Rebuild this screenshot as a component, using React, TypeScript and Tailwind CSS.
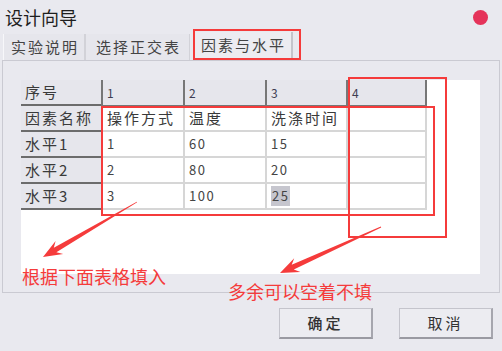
import React from 'react';

const cjk = '"Noto Sans CJK SC", "Noto Sans", sans-serif';

// table rows: label + 4 cells
const rows = [
  { label: '因素名称', cells: ['操作方式', '温度', '洗涤时间', ''] },
  { label: '水平1', cells: ['1', '60', '15', ''] },
  { label: '水平2', cells: ['2', '80', '20', ''] },
  { label: '水平3', cells: ['3', '100', '25', ''] },
];

const colW = ['w-[82px]', 'w-[82px]', 'w-[81px]', 'w-[81px]'];

// tapered arrow polygon from start (thin) to tip
function arrowPoints(sx: number, sy: number, tx: number, ty: number) {
  const dx = tx - sx;
  const dy = ty - sy;
  const len = Math.hypot(dx, dy);
  const ux = dx / len;
  const uy = dy / len;
  const nx = -uy;
  const ny = ux;
  const p = (along: number, side: number) =>
    `${(tx - ux * along + nx * side).toFixed(1)},${(ty - uy * along + ny * side).toFixed(1)}`;
  const s = (side: number) => `${(sx + nx * side).toFixed(1)},${(sy + ny * side).toFixed(1)}`;
  return [s(0.4), p(14, 2.6), p(19, 7.5), p(0, 0), p(19, -7.5), p(14, -2.6), s(-0.4)].join(' ');
}

export default function App() {
  return (
    <div
      className="relative w-[502px] h-[351px] overflow-hidden bg-[#e9e9ef] text-[#3a3a3a]"
      style={{ fontFamily: cjk }}
    >
      {/* Title bar */}
      <div className="flex h-[30px] items-center justify-between pl-[5px] pr-[14px] pt-[4px]">
        <span className="text-[18px] leading-none text-[#1e1e1e]">设计向导</span>
        <span className="block h-[15px] w-[15px] rounded-full bg-[#e5335a]" />
      </div>

      {/* Tabs */}
      <div className="flex h-[30px] items-end pl-[3px] text-[15px] tracking-[2px] text-[#444]">
        <div className="flex h-[26px] w-[83px] items-center justify-center border-l border-[#f7f7fa] border-r-2 border-r-[#d2d2d8] bg-[#e6e6ec] pl-[2px]">
          实验说明
        </div>
        <div className="flex h-[26px] w-[104px] items-center justify-center border-r border-[#d2d2d8] bg-[#e6e6ec] pl-[2px]">
          选择正交表
        </div>
        <div className="ml-[3px] flex h-[28px] w-[100px] items-center justify-center border-l border-[#f7f7fa] border-r-2 border-r-[#c4c4cb] bg-[#ececf1] pb-[1px] pl-[2px]">
          因素与水平
        </div>
      </div>

      {/* Panel */}
      <div className="mx-[2px] h-[233px] border border-[#cacad2] pl-[18px] pt-[19px]">
        <div className="h-[194px] w-[459px] bg-white">
          <div className="flex">
            <div className="flex h-[26px] w-[80px] items-center border-b-2 border-[#6c6c6c] bg-[#e6e6ec] pl-[4px] text-[15px] tracking-[2px]">
              序号
            </div>
            {['1', '2', '3', '4'].map((n, i) => (
              <div
                key={n}
                className={`flex h-[26px] ${colW[i]} items-center border-b border-l-2 border-[#777] bg-[#e6e6ec] pl-[4px] text-[12px] text-[#3d3d52] ${i === 3 ? 'border-r-2' : ''}`}
              >
                {n}
              </div>
            ))}
          </div>
          {rows.map((r) => (
            <div key={r.label} className="flex">
              <div className="flex h-[26px] w-[80px] items-center border-b-2 border-[#6c6c6c] bg-[#e6e6ec] pl-[4px] text-[15px] tracking-[2px]">
                {r.label}
              </div>
              {r.cells.map((c, i) => (
                <div
                  key={i}
                  className={`flex h-[26px] ${colW[i]} items-center border-b-2 border-l-2 border-[#d6d6d6] pl-[4px] ${i === 3 ? 'border-r-2' : ''} ${/^\d+$/.test(c) ? 'text-[13px] tracking-[1.5px] text-[#444]' : 'text-[15px] tracking-[2px]'}`}
                >
                  {c === '25' ? <span className="bg-[#c6c6ce] px-[1px]">{c}</span> : c}
                </div>
              ))}
            </div>
          ))}
        </div>
      </div>

      {/* Buttons */}
      <div className="mt-[15px] flex justify-end gap-[26px] pr-[9px]">
        <button className="h-[31px] w-[94px] border border-[#c4c4cc] border-b-2 border-b-[#9a9aa2] border-r-2 border-r-[#a6a6ae] bg-[#ececf1] text-[15px] font-medium tracking-[3px] text-[#333]">
          确定
        </button>
        <button className="h-[31px] w-[94px] border border-[#c4c4cc] border-b-2 border-b-[#9a9aa2] border-r-2 border-r-[#a6a6ae] bg-[#ececf1] text-[15px] tracking-[3px] text-[#333]">
          取消
        </button>
      </div>

      {/* Annotation boxes */}
      <div className="absolute left-[193px] top-[29px] h-[31px] w-[108px] border-2 border-[#f53b3b]" />
      <div className="absolute left-[101px] top-[106px] h-[110px] w-[334px] border-2 border-[#f53b3b]" />
      <div className="absolute left-[348px] top-[77px] h-[161px] w-[99px] border-2 border-[#f53b3b]" />

      {/* Annotation arrows */}
      <svg className="pointer-events-none absolute left-0 top-0" width="502" height="351">
        <polygon points={arrowPoints(137, 202, 43, 257)} fill="#f53b3b" />
        <polygon points={arrowPoints(381, 227, 280, 273)} fill="#f53b3b" />
      </svg>

      {/* Annotation text */}
      <div className="absolute left-[22px] top-[265px] text-[18px] leading-[22px] text-[#f53b3b]">
        根据下面表格填入
      </div>
      <div className="absolute left-[228px] top-[280px] text-[18px] leading-[22px] text-[#f53b3b]">
        多余可以空着不填
      </div>
    </div>
  );
}
